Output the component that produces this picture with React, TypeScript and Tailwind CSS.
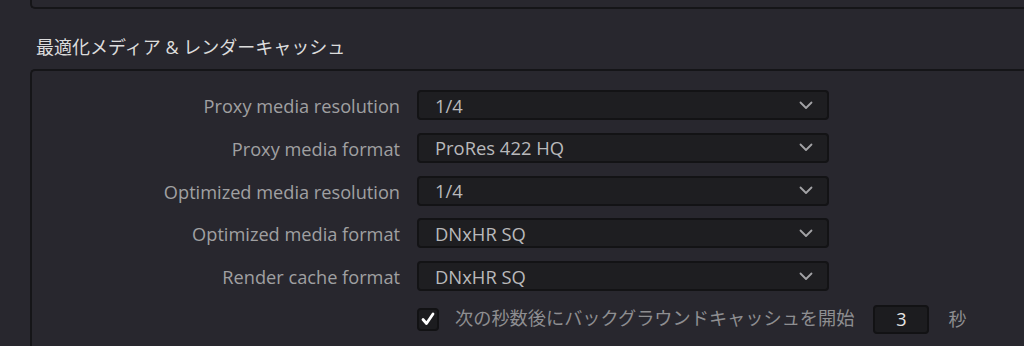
import React from 'react';

const rows = [
  { label: 'Proxy media resolution', value: '1/4' },
  { label: 'Proxy media format', value: 'ProRes 422 HQ' },
  { label: 'Optimized media resolution', value: '1/4' },
  { label: 'Optimized media format', value: 'DNxHR SQ' },
  { label: 'Render cache format', value: 'DNxHR SQ' },
];

const Chevron: React.FC = () => (
  <svg width="14" height="9" viewBox="0 0 14 9" fill="none">
    <path d="M1.5 1.5 L7 7 L12.5 1.5" stroke="#a3a3a6" strokeWidth="1.8" strokeLinecap="round" strokeLinejoin="round" />
  </svg>
);

const App: React.FC = () => {
  return (
    <div
      className="w-[1024px] h-[346px] overflow-hidden bg-[#28272e] pl-[30px]"
      style={{ fontFamily: '"Open Sans", "Noto Sans CJK JP", sans-serif' }}
    >
      {/* previous section panel */}
      <div className="h-[9px] w-[1010px] border-b-2 border-l-2 border-[#151518] rounded-bl-[5px]" />

      <h2 className="pl-[6px] pt-[26px] text-[18px] leading-[24px] text-[#dcdcdc]">
        最適化メディア &amp; レンダーキャッシュ
      </h2>

      {/* settings panel */}
      <div className="mt-[10px] w-[1010px] h-[300px] border-t-2 border-l-2 border-[#151518] rounded-tl-[5px] pt-[19px]">
        <div className="flex flex-col gap-[12.75px]">
          {rows.map((row) => (
            <div key={row.label} className="flex items-center h-[30px]">
              <div className="w-[368px] text-right text-[18.2px] leading-[30px] pt-[2px] text-[#a0a0a2]">{row.label}</div>
              <div className="ml-[17px] w-[412px] h-[30px] flex items-center justify-between bg-[#1e1e21] border-2 border-[#131315] rounded-[4px] pl-[16px] pr-[14px]">
                <span className="text-[18.4px] pt-[1px] text-[#b9b9bb]">{row.value}</span>
                <Chevron />
              </div>
            </div>
          ))}
        </div>

        <div className="flex items-center mt-[13px] ml-[385px] h-[30px]">
          <div className="w-[22px] h-[23px] flex items-center justify-center bg-[#1c1c1f] border-2 border-[#121214] rounded-[4px]">
            <svg width="14" height="14" viewBox="0 0 14 14" fill="none">
              <path d="M2 7.5 L5.5 11.5 L12 2" stroke="#ffffff" strokeWidth="2.8" strokeLinecap="round" strokeLinejoin="round" />
            </svg>
          </div>
          <span className="ml-[16px] text-[18.2px] text-[#8e8e91]">次の秒数後にバックグラウンドキャッシュを開始</span>
          <div className="ml-[19px] w-[56px] h-[29px] flex items-center justify-center bg-[#1c1c1f] border-2 border-[#121214] rounded-[4px] text-[18px] text-[#e6e6e6]">
            3
          </div>
          <span className="ml-[19px] text-[18px] text-[#8e8e91]">秒</span>
        </div>
      </div>
    </div>
  );
};

export default App;
